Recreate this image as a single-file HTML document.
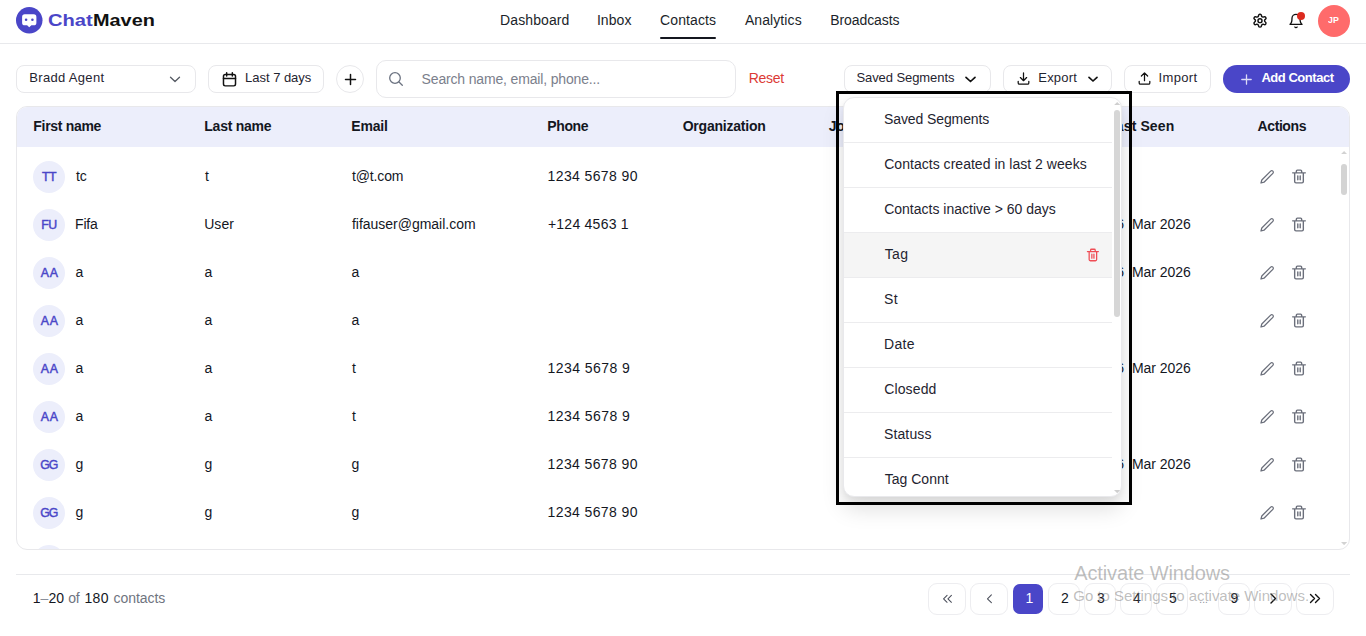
<!DOCTYPE html>
<html lang="en"><head><meta charset="utf-8"><title>ChatMaven - Contacts</title>
<style>
html,body{margin:0;padding:0;background:#fff}
body{width:1366px;height:636px;position:relative;overflow:hidden;font-family:'Liberation Sans',sans-serif}
div,svg,span{position:absolute;box-sizing:border-box}
.t{white-space:pre;line-height:normal}
</style></head><body>
<div style="left:0px;top:43px;width:1366px;height:1px;background:#e8e9ec"></div>
<svg style="left:16px;top:7px;" width="26.5" height="26.5" viewBox="0 0 26 26" fill="none"><circle cx="13" cy="13" r="13" fill="#4a46c8"/><path d="M8.6 7.2h8.8a2.6 2.6 0 0 1 2.6 2.6v5.6a2.6 2.6 0 0 1-2.6 2.6h-2.3L13 19.9 10.900 18H8.600A2.600 2.600 0 0 1 6 15.400V9.800a2.600 2.600 0 0 1 2.600-2.600z" fill="#fff"/><circle cx="9.900" cy="12.600" r="1.250" fill="#4a46c8"/><circle cx="16.100" cy="12.600" r="1.250" fill="#4a46c8"/></svg>
<div style="left:659.7px;top:36.5px;width:56px;height:2px;background:#14171f;border-radius:1px"></div>
<svg style="left:1252px;top:13.2px;" width="16" height="15.4" viewBox="0 0 24 24" preserveAspectRatio="none" fill="none"><path d="M12.22 2h-.44a2 2 0 0 0-2 2v.18a2 2 0 0 1-1 1.73l-.43.25a2 2 0 0 1-2 0l-.15-.08a2 2 0 0 0-2.73.73l-.22.38a2 2 0 0 0 .73 2.73l.15.1a2 2 0 0 1 1 1.72v.51a2 2 0 0 1-1 1.74l-.15.09a2 2 0 0 0-.73 2.73l.22.38a2 2 0 0 0 2.73.73l.15-.08a2 2 0 0 1 2 0l.43.25a2 2 0 0 1 1 1.73V20a2 2 0 0 0 2 2h.44a2 2 0 0 0 2-2v-.18a2 2 0 0 1 1-1.73l.43-.25a2 2 0 0 1 2 0l.15.08a2 2 0 0 0 2.73-.73l.22-.39a2 2 0 0 0-.73-2.73l-.15-.08a2 2 0 0 1-1-1.74v-.5a2 2 0 0 1 1-1.74l.15-.09a2 2 0 0 0 .73-2.73l-.22-.38a2 2 0 0 0-2.73-.73l-.15.08a2 2 0 0 1-2 0l-.43-.25a2 2 0 0 1-1-1.73V4a2 2 0 0 0-2-2z" stroke="#111" stroke-width="2.2" stroke-linejoin="round"/><circle cx="12" cy="12" r="3" stroke="#111" stroke-width="2.2"/></svg>
<svg style="left:1288px;top:13px;" width="16" height="16" viewBox="0 0 24 24" preserveAspectRatio="none" fill="none"><path d="M6 8a6 6 0 0 1 12 0c0 7 3 9 3 9H3s3-2 3-9" stroke="#111" stroke-width="2" stroke-linecap="round" stroke-linejoin="round"/><path d="M10.3 21a1.94 1.94 0 0 0 3.4 0" stroke="#111" stroke-width="2" stroke-linecap="round"/></svg>
<div style="left:1297px;top:12px;width:8px;height:8px;background:#dc2a1f;border-radius:50%"></div>
<div style="left:1318px;top:5px;width:32px;height:32px;background:#ff6b6b;border-radius:50%"></div>
<div style="left:16px;top:65px;width:179.5px;height:28px;border:1px solid #e8e8eb;border-radius:8px;background:#fff"></div>
<svg style="left:169px;top:74.5px;" width="12" height="9" viewBox="0 0 12 9" fill="none"><path d="M1.5 2.200L6 6.500l4.500-4.300" stroke="#555a63" stroke-width="1.300" stroke-linecap="round" stroke-linejoin="round"/></svg>
<div style="left:208px;top:65px;width:116px;height:28px;border:1px solid #e8e8eb;border-radius:8px;background:#fff"></div>
<svg style="left:220.5px;top:70.5px;" width="17" height="17" viewBox="0 0 24 24" fill="none"><rect x="3.500" y="5" width="17" height="16" rx="2.500" stroke="#111" stroke-width="2.100"/><path d="M3.500 10.500h17M8 2.500v4.500M16 2.500v4.500" stroke="#111" stroke-width="2.100" stroke-linecap="round"/></svg>
<div style="left:336px;top:65px;width:28px;height:28px;border:1px solid #e8e8eb;border-radius:50%;background:#fff"></div>
<svg style="left:343.5px;top:72.5px;" width="13" height="13" viewBox="0 0 13 13" fill="none"><path d="M6.500 1.500v10M1.500 6.500h10" stroke="#111" stroke-width="1.500" stroke-linecap="round"/></svg>
<div style="left:376px;top:60px;width:360px;height:38px;border:1px solid #e8e8eb;border-radius:10px;background:#fff"></div>
<svg style="left:388px;top:71px;" width="16" height="16" viewBox="0 0 16 16" fill="none"><circle cx="7" cy="7" r="5.300" stroke="#6b7280" stroke-width="1.300"/><path d="M11 11l3.300 3.300" stroke="#6b7280" stroke-width="1.300" stroke-linecap="round"/></svg>
<div style="left:843.5px;top:65px;width:147.5px;height:28px;border:1px solid #e8e8eb;border-radius:8px;background:#fff"></div>
<svg style="left:963.5px;top:74.5px;" width="13" height="9" viewBox="0 0 13 9" fill="none"><path d="M2 2.300l4.500 4.200L11 2.300" stroke="#111" stroke-width="1.700" stroke-linecap="round" stroke-linejoin="round"/></svg>
<div style="left:1003px;top:65px;width:108.5px;height:28px;border:1px solid #e8e8eb;border-radius:8px;background:#fff"></div>
<svg style="left:1015.5px;top:71px;" width="15" height="15" viewBox="0 0 24 24" fill="none"><path d="M12 3v12M7 10.500l5 5 5-5M3.500 16.500v2.500a2 2 0 0 0 2 2h13a2 2 0 0 0 2-2v-2.500" stroke="#111" stroke-width="2" stroke-linecap="round" stroke-linejoin="round"/></svg>
<svg style="left:1086.5px;top:74.5px;" width="12" height="9" viewBox="0 0 12 9" fill="none"><path d="M2 2.300l4 3.700 4-3.700" stroke="#111" stroke-width="1.700" stroke-linecap="round" stroke-linejoin="round"/></svg>
<div style="left:1124px;top:65px;width:86.5px;height:28px;border:1px solid #e8e8eb;border-radius:8px;background:#fff"></div>
<svg style="left:1136.5px;top:71px;" width="15" height="15" viewBox="0 0 24 24" fill="none"><path d="M12 15.500V3.500M7 8l5-5 5 5M3.500 16.500v2.500a2 2 0 0 0 2 2h13a2 2 0 0 0 2-2v-2.500" stroke="#111" stroke-width="2" stroke-linecap="round" stroke-linejoin="round"/></svg>
<div style="left:1223px;top:65px;width:127px;height:28px;background:#4a46c8;border-radius:14px"></div>
<svg style="left:1240.5px;top:73.5px;" width="11" height="11" viewBox="0 0 11 11" fill="none"><path d="M5.500 0.800v9.400M0.800 5.500h9.400" stroke="#dcdbf6" stroke-width="1.300" stroke-linecap="round"/></svg>
<div style="left:16px;top:106px;width:1334px;height:444px;border:1px solid #e8e8eb;border-radius:11px;background:#fff;overflow:hidden"><div style="left:0px;top:0px;width:1334px;height:40px;background:#eceefb"></div><div style="left:15.700000000000003px;top:54px;width:32px;height:32px;background:#eceefb;border-radius:50%"></div><svg style="left:1242px;top:62px;" width="16" height="16" viewBox="0 0 24 24" fill="none"><path d="M17.500 3.200a2.300 2.300 0 0 1 3.300 3.300L7.500 19.800 3 21l1.200-4.500z" stroke="#6b6f7b" stroke-width="1.900" stroke-linejoin="round"/></svg><svg style="left:1274px;top:61px;" width="16" height="17" viewBox="0 0 24 25" fill="none"><path d="M2.500 7h19M8 7V4.500a1.500 1.500 0 0 1 1.500-1.500h5a1.500 1.500 0 0 1 1.500 1.500V7M5.500 7v13a2 2 0 0 0 2 2h9a2 2 0 0 0 2-2V7M10.200 11.500v6M13.800 11.500v6" stroke="#6b6f7b" stroke-width="2.100" stroke-linecap="round" stroke-linejoin="round"/></svg><div style="left:15.700000000000003px;top:102px;width:32px;height:32px;background:#eceefb;border-radius:50%"></div><svg style="left:1242px;top:110px;" width="16" height="16" viewBox="0 0 24 24" fill="none"><path d="M17.500 3.200a2.300 2.300 0 0 1 3.300 3.300L7.500 19.800 3 21l1.200-4.500z" stroke="#6b6f7b" stroke-width="1.900" stroke-linejoin="round"/></svg><svg style="left:1274px;top:109px;" width="16" height="17" viewBox="0 0 24 25" fill="none"><path d="M2.500 7h19M8 7V4.500a1.500 1.500 0 0 1 1.500-1.500h5a1.500 1.500 0 0 1 1.500 1.500V7M5.500 7v13a2 2 0 0 0 2 2h9a2 2 0 0 0 2-2V7M10.200 11.500v6M13.800 11.500v6" stroke="#6b6f7b" stroke-width="2.100" stroke-linecap="round" stroke-linejoin="round"/></svg><div style="left:15.700000000000003px;top:150px;width:32px;height:32px;background:#eceefb;border-radius:50%"></div><svg style="left:1242px;top:158px;" width="16" height="16" viewBox="0 0 24 24" fill="none"><path d="M17.500 3.200a2.300 2.300 0 0 1 3.300 3.300L7.500 19.800 3 21l1.200-4.500z" stroke="#6b6f7b" stroke-width="1.900" stroke-linejoin="round"/></svg><svg style="left:1274px;top:157px;" width="16" height="17" viewBox="0 0 24 25" fill="none"><path d="M2.500 7h19M8 7V4.500a1.500 1.500 0 0 1 1.500-1.500h5a1.500 1.500 0 0 1 1.500 1.500V7M5.500 7v13a2 2 0 0 0 2 2h9a2 2 0 0 0 2-2V7M10.200 11.500v6M13.800 11.500v6" stroke="#6b6f7b" stroke-width="2.100" stroke-linecap="round" stroke-linejoin="round"/></svg><div style="left:15.700000000000003px;top:198px;width:32px;height:32px;background:#eceefb;border-radius:50%"></div><svg style="left:1242px;top:206px;" width="16" height="16" viewBox="0 0 24 24" fill="none"><path d="M17.500 3.200a2.300 2.300 0 0 1 3.300 3.300L7.500 19.800 3 21l1.200-4.500z" stroke="#6b6f7b" stroke-width="1.900" stroke-linejoin="round"/></svg><svg style="left:1274px;top:205px;" width="16" height="17" viewBox="0 0 24 25" fill="none"><path d="M2.500 7h19M8 7V4.500a1.500 1.500 0 0 1 1.500-1.500h5a1.500 1.500 0 0 1 1.500 1.500V7M5.500 7v13a2 2 0 0 0 2 2h9a2 2 0 0 0 2-2V7M10.200 11.500v6M13.800 11.500v6" stroke="#6b6f7b" stroke-width="2.100" stroke-linecap="round" stroke-linejoin="round"/></svg><div style="left:15.700000000000003px;top:246px;width:32px;height:32px;background:#eceefb;border-radius:50%"></div><svg style="left:1242px;top:254px;" width="16" height="16" viewBox="0 0 24 24" fill="none"><path d="M17.500 3.200a2.300 2.300 0 0 1 3.300 3.300L7.500 19.800 3 21l1.200-4.500z" stroke="#6b6f7b" stroke-width="1.900" stroke-linejoin="round"/></svg><svg style="left:1274px;top:253px;" width="16" height="17" viewBox="0 0 24 25" fill="none"><path d="M2.500 7h19M8 7V4.500a1.500 1.500 0 0 1 1.500-1.500h5a1.500 1.500 0 0 1 1.500 1.500V7M5.500 7v13a2 2 0 0 0 2 2h9a2 2 0 0 0 2-2V7M10.200 11.500v6M13.800 11.500v6" stroke="#6b6f7b" stroke-width="2.100" stroke-linecap="round" stroke-linejoin="round"/></svg><div style="left:15.700000000000003px;top:294px;width:32px;height:32px;background:#eceefb;border-radius:50%"></div><svg style="left:1242px;top:302px;" width="16" height="16" viewBox="0 0 24 24" fill="none"><path d="M17.500 3.200a2.300 2.300 0 0 1 3.300 3.300L7.500 19.800 3 21l1.200-4.500z" stroke="#6b6f7b" stroke-width="1.900" stroke-linejoin="round"/></svg><svg style="left:1274px;top:301px;" width="16" height="17" viewBox="0 0 24 25" fill="none"><path d="M2.500 7h19M8 7V4.500a1.500 1.500 0 0 1 1.500-1.500h5a1.500 1.500 0 0 1 1.500 1.500V7M5.500 7v13a2 2 0 0 0 2 2h9a2 2 0 0 0 2-2V7M10.200 11.500v6M13.800 11.500v6" stroke="#6b6f7b" stroke-width="2.100" stroke-linecap="round" stroke-linejoin="round"/></svg><div style="left:15.700000000000003px;top:342px;width:32px;height:32px;background:#eceefb;border-radius:50%"></div><svg style="left:1242px;top:350px;" width="16" height="16" viewBox="0 0 24 24" fill="none"><path d="M17.500 3.200a2.300 2.300 0 0 1 3.300 3.300L7.500 19.800 3 21l1.200-4.500z" stroke="#6b6f7b" stroke-width="1.900" stroke-linejoin="round"/></svg><svg style="left:1274px;top:349px;" width="16" height="17" viewBox="0 0 24 25" fill="none"><path d="M2.500 7h19M8 7V4.500a1.500 1.500 0 0 1 1.500-1.500h5a1.500 1.500 0 0 1 1.500 1.500V7M5.500 7v13a2 2 0 0 0 2 2h9a2 2 0 0 0 2-2V7M10.200 11.500v6M13.800 11.500v6" stroke="#6b6f7b" stroke-width="2.100" stroke-linecap="round" stroke-linejoin="round"/></svg><div style="left:15.700000000000003px;top:390px;width:32px;height:32px;background:#eceefb;border-radius:50%"></div><svg style="left:1242px;top:398px;" width="16" height="16" viewBox="0 0 24 24" fill="none"><path d="M17.500 3.200a2.300 2.300 0 0 1 3.300 3.300L7.500 19.800 3 21l1.200-4.500z" stroke="#6b6f7b" stroke-width="1.900" stroke-linejoin="round"/></svg><svg style="left:1274px;top:397px;" width="16" height="17" viewBox="0 0 24 25" fill="none"><path d="M2.500 7h19M8 7V4.500a1.500 1.500 0 0 1 1.500-1.500h5a1.500 1.500 0 0 1 1.500 1.500V7M5.500 7v13a2 2 0 0 0 2 2h9a2 2 0 0 0 2-2V7M10.200 11.500v6M13.800 11.500v6" stroke="#6b6f7b" stroke-width="2.100" stroke-linecap="round" stroke-linejoin="round"/></svg><div style="left:15.700000000000003px;top:438px;width:32px;height:32px;background:#eceefb;border-radius:50%"></div><div style="left:1324px;top:56.5px;width:6px;height:31.5px;background:#d4d4d4;border-radius:3px"></div><svg style="left:1324px;top:44px;" width="6.2" height="3.2" viewBox="0 0 6 3" fill="none"><path d="M0 3L3 0l3 3z" fill="#d2d2d2"/></svg><svg style="left:1324px;top:435px;" width="6.2" height="3.2" viewBox="0 0 6 3" fill="none"><path d="M0 0L3 3l3-3z" fill="#d2d2d2"/></svg></div>
<div style="left:16px;top:574px;width:1334px;height:1px;background:#e8e9ec"></div>
<div style="left:928px;top:583px;width:38px;height:32px;border:1px solid #ededf0;border-radius:9px;background:#fff"></div>
<div style="left:970px;top:583px;width:38px;height:32px;border:1px solid #ededf0;border-radius:9px;background:#fff"></div>
<div style="left:1048px;top:583px;width:32px;height:32px;border:1px solid #ededf0;border-radius:9px;background:#fff"></div>
<div style="left:1084px;top:583px;width:32px;height:32px;border:1px solid #ededf0;border-radius:9px;background:#fff"></div>
<div style="left:1120px;top:583px;width:32px;height:32px;border:1px solid #ededf0;border-radius:9px;background:#fff"></div>
<div style="left:1156px;top:583px;width:32px;height:32px;border:1px solid #ededf0;border-radius:9px;background:#fff"></div>
<div style="left:1218px;top:583px;width:32px;height:32px;border:1px solid #ededf0;border-radius:9px;background:#fff"></div>
<div style="left:1254px;top:583px;width:38px;height:32px;border:1px solid #ededf0;border-radius:9px;background:#fff"></div>
<div style="left:1296px;top:583px;width:38px;height:32px;border:1px solid #ededf0;border-radius:9px;background:#fff"></div>
<div style="left:1013px;top:584px;width:30px;height:30px;background:#4a46c8;border-radius:7px"></div>
<svg style="left:941.5px;top:594px;" width="11" height="9.6" viewBox="0 0 12 11" fill="none"><path d="M5.500 1.500L1.500 5.500l4 4M10.500 1.500L6.500 5.500l4 4" stroke="#4a4e5a" stroke-width="1.200" stroke-linecap="round" stroke-linejoin="round"/></svg>
<svg style="left:985.5px;top:594px;" width="7.3" height="9.6" viewBox="0 0 8 11" fill="none"><path d="M6 1L1.500 5.500 6 10" stroke="#4a4e5a" stroke-width="1.200" stroke-linecap="round" stroke-linejoin="round"/></svg>
<svg style="left:1269px;top:593px;" width="8" height="11" viewBox="0 0 8 11" fill="none"><path d="M2 1l4.500 4.500L2 10" stroke="#111" stroke-width="1.400" stroke-linecap="round" stroke-linejoin="round"/></svg>
<svg style="left:1309px;top:593px;" width="12" height="11" viewBox="0 0 12 11" fill="none"><path d="M1.500 1.500l4 4-4 4M6.500 1.500l4 4-4 4" stroke="#111" stroke-width="1.400" stroke-linecap="round" stroke-linejoin="round"/></svg>
<div style="left:843px;top:97px;width:279px;height:399.5px;z-index:10;background:#fff;border:1px solid #e9e9ec;border-radius:11px;overflow:hidden;box-shadow:0 12px 22px rgba(0,0,0,0.13),0 3px 6px rgba(0,0,0,0.05)"><div style="left:0px;top:44px;width:268.3px;height:1px;background:#ececee"></div><div style="left:0px;top:89px;width:268.3px;height:1px;background:#ececee"></div><div style="left:0px;top:134px;width:268.3px;height:45px;background:#f5f5f5"></div><div style="left:0px;top:134px;width:268.3px;height:1px;background:#ececee"></div><div style="left:0px;top:179px;width:268.3px;height:1px;background:#ececee"></div><div style="left:0px;top:224px;width:268.3px;height:1px;background:#ececee"></div><div style="left:0px;top:269px;width:268.3px;height:1px;background:#ececee"></div><div style="left:0px;top:314px;width:268.3px;height:1px;background:#ececee"></div><div style="left:0px;top:359px;width:268.3px;height:1px;background:#ececee"></div><svg style="left:242.29999999999995px;top:149.3px;" width="13.8" height="16" viewBox="0 0 24 26" fill="none"><path d="M2.500 7h19M8 7V4.500a1.500 1.500 0 0 1 1.500-1.500h5a1.500 1.500 0 0 1 1.500 1.500V7M5.500 7v14a2 2 0 0 0 2 2h9a2 2 0 0 0 2-2V7M10.200 11.500v7M13.800 11.500v7" stroke="#ef4d55" stroke-width="2.200" stroke-linecap="round" stroke-linejoin="round"/></svg><div style="left:270.20000000000005px;top:12px;width:5.8px;height:206.5px;background:#d6d6d6;border-radius:3px"></div><svg style="left:270px;top:4px;" width="6.4" height="3.2" viewBox="0 0 6 3" fill="none"><path d="M0 3L3 0l3 3z" fill="#cfcfcf"/></svg><svg style="left:270px;top:391.5px;" width="6.4" height="3.2" viewBox="0 0 6 3" fill="none"><path d="M0 0L3 3l3-3z" fill="#cfcfcf"/></svg></div>
<div style="left:836px;top:91px;width:296px;height:413.5px;z-index:20;border:3px solid #000"></div>
<span class="t" style="left:47.6px;top:10px;font-size:17.4px;font-weight:700;color:#4a46c8;letter-spacing:0.00px;transform-origin:0 0;transform:scaleX(1.156);">Chat</span>
<span class="t" style="left:92.8px;top:10px;font-size:17.4px;font-weight:700;color:#111111;letter-spacing:0.00px;transform-origin:0 0;transform:scaleX(1.143);">Maven</span>
<span class="t" style="left:500.1px;top:12px;font-size:14px;font-weight:400;color:#1b1f2a;letter-spacing:0.09px;">Dashboard</span>
<span class="t" style="left:596.9px;top:12px;font-size:14px;font-weight:400;color:#1b1f2a;letter-spacing:0.07px;">Inbox</span>
<span class="t" style="left:660.1px;top:12px;font-size:14px;font-weight:400;color:#1b1f2a;letter-spacing:0.09px;">Contacts</span>
<span class="t" style="left:744.9px;top:12px;font-size:14px;font-weight:400;color:#1b1f2a;letter-spacing:0.09px;">Analytics</span>
<span class="t" style="left:830.3px;top:12px;font-size:14px;font-weight:400;color:#1b1f2a;letter-spacing:-0.10px;">Broadcasts</span>
<span class="t" style="left:1328.3px;top:14px;font-size:9.8px;font-weight:700;color:#ffffff;letter-spacing:0.00px;transform-origin:0 0;transform:scaleX(0.898);">JP</span>
<span class="t" style="left:29.3px;top:70px;font-size:13px;font-weight:400;color:#1f2430;letter-spacing:0.32px;">Bradd Agent</span>
<span class="t" style="left:245.1px;top:70px;font-size:13px;font-weight:400;color:#1f2430;letter-spacing:-0.03px;">Last 7 days</span>
<span class="t" style="left:421.6px;top:71px;font-size:14px;font-weight:400;color:#7b808c;letter-spacing:-0.16px;">Search name, email, phone...</span>
<span class="t" style="left:748.7px;top:70px;font-size:14px;font-weight:400;color:#dc3a35;letter-spacing:-0.28px;">Reset</span>
<span class="t" style="left:856.4px;top:70px;font-size:13px;font-weight:400;color:#1f2430;letter-spacing:-0.07px;">Saved Segments</span>
<span class="t" style="left:1038.3px;top:70px;font-size:13px;font-weight:400;color:#1f2430;letter-spacing:0.18px;">Export</span>
<span class="t" style="left:1158.6px;top:70px;font-size:13px;font-weight:400;color:#1f2430;letter-spacing:0.34px;">Import</span>
<span class="t" style="left:1261.4px;top:70px;font-size:13px;font-weight:700;color:#ffffff;letter-spacing:-0.46px;">Add Contact</span>
<span class="t" style="left:33.3px;top:118px;font-size:14px;font-weight:700;color:#14171f;letter-spacing:-0.30px;">First name</span>
<span class="t" style="left:204.3px;top:118px;font-size:14px;font-weight:700;color:#14171f;letter-spacing:-0.25px;">Last name</span>
<span class="t" style="left:351.3px;top:118px;font-size:14px;font-weight:700;color:#14171f;letter-spacing:-0.17px;">Email</span>
<span class="t" style="left:547.3px;top:118px;font-size:14px;font-weight:700;color:#14171f;letter-spacing:-0.38px;">Phone</span>
<span class="t" style="left:682.7px;top:118px;font-size:14px;font-weight:700;color:#14171f;letter-spacing:-0.22px;">Organization</span>
<span class="t" style="left:828.8px;top:118px;font-size:14px;font-weight:700;color:#14171f;letter-spacing:-0.43px;">Job Title</span>
<span class="t" style="left:1107.2px;top:118px;font-size:14px;font-weight:700;color:#14171f;letter-spacing:0.11px;">Last Seen</span>
<span class="t" style="left:1257.6px;top:118px;font-size:14px;font-weight:700;color:#14171f;letter-spacing:-0.42px;">Actions</span>
<span class="t" style="left:41.9px;top:170px;font-size:12.3px;font-weight:400;color:#4a46c8;letter-spacing:-0.44px;z-index:1;-webkit-text-stroke:0.45px #4a46c8">TT</span>
<span class="t" style="left:75.9px;top:168px;font-size:14px;font-weight:400;color:#14171f;letter-spacing:-0.12px;z-index:1">tc</span>
<span class="t" style="left:205.0px;top:168px;font-size:14px;font-weight:400;color:#14171f;letter-spacing:2.29px;z-index:1">t</span>
<span class="t" style="left:351.9px;top:168px;font-size:14px;font-weight:400;color:#14171f;letter-spacing:-0.12px;z-index:1">t@t.com</span>
<span class="t" style="left:547.6px;top:168px;font-size:14px;font-weight:400;color:#14171f;letter-spacing:0.38px;z-index:1">1234 5678 90</span>
<span class="t" style="left:41.2px;top:218px;font-size:12.3px;font-weight:400;color:#4a46c8;letter-spacing:-0.38px;z-index:1;-webkit-text-stroke:0.45px #4a46c8">FU</span>
<span class="t" style="left:75.0px;top:216px;font-size:14px;font-weight:400;color:#14171f;letter-spacing:-0.16px;z-index:1">Fifa</span>
<span class="t" style="left:204.2px;top:216px;font-size:14px;font-weight:400;color:#14171f;letter-spacing:0.05px;z-index:1">User</span>
<span class="t" style="left:352.0px;top:216px;font-size:14px;font-weight:400;color:#14171f;letter-spacing:-0.02px;z-index:1">fifauser@gmail.com</span>
<span class="t" style="left:547.9px;top:216px;font-size:14px;font-weight:400;color:#14171f;letter-spacing:0.25px;z-index:1">+124 4563 1</span>
<span class="t" style="left:1108.1px;top:216px;font-size:14px;font-weight:400;color:#14171f;letter-spacing:0.49px;z-index:1">16</span>
<span class="t" style="left:1131.9px;top:216px;font-size:14px;font-weight:400;color:#14171f;letter-spacing:-0.04px;z-index:1">Mar 2026</span>
<span class="t" style="left:40.7px;top:266px;font-size:12.3px;font-weight:400;color:#4a46c8;letter-spacing:0.75px;z-index:1;-webkit-text-stroke:0.45px #4a46c8">AA</span>
<span class="t" style="left:75.4px;top:264px;font-size:14px;font-weight:400;color:#14171f;letter-spacing:0.88px;z-index:1">a</span>
<span class="t" style="left:204.6px;top:264px;font-size:14px;font-weight:400;color:#14171f;letter-spacing:0.88px;z-index:1">a</span>
<span class="t" style="left:351.4px;top:264px;font-size:14px;font-weight:400;color:#14171f;letter-spacing:0.88px;z-index:1">a</span>
<span class="t" style="left:1108.1px;top:264px;font-size:14px;font-weight:400;color:#14171f;letter-spacing:0.49px;z-index:1">16</span>
<span class="t" style="left:1131.9px;top:264px;font-size:14px;font-weight:400;color:#14171f;letter-spacing:-0.04px;z-index:1">Mar 2026</span>
<span class="t" style="left:40.7px;top:314px;font-size:12.3px;font-weight:400;color:#4a46c8;letter-spacing:0.75px;z-index:1;-webkit-text-stroke:0.45px #4a46c8">AA</span>
<span class="t" style="left:75.4px;top:312px;font-size:14px;font-weight:400;color:#14171f;letter-spacing:0.88px;z-index:1">a</span>
<span class="t" style="left:204.6px;top:312px;font-size:14px;font-weight:400;color:#14171f;letter-spacing:0.88px;z-index:1">a</span>
<span class="t" style="left:351.4px;top:312px;font-size:14px;font-weight:400;color:#14171f;letter-spacing:0.88px;z-index:1">a</span>
<span class="t" style="left:40.7px;top:362px;font-size:12.3px;font-weight:400;color:#4a46c8;letter-spacing:0.75px;z-index:1;-webkit-text-stroke:0.45px #4a46c8">AA</span>
<span class="t" style="left:75.4px;top:360px;font-size:14px;font-weight:400;color:#14171f;letter-spacing:0.88px;z-index:1">a</span>
<span class="t" style="left:204.6px;top:360px;font-size:14px;font-weight:400;color:#14171f;letter-spacing:0.88px;z-index:1">a</span>
<span class="t" style="left:351.9px;top:360px;font-size:14px;font-weight:400;color:#14171f;letter-spacing:2.29px;z-index:1">t</span>
<span class="t" style="left:547.6px;top:360px;font-size:14px;font-weight:400;color:#14171f;letter-spacing:0.43px;z-index:1">1234 5678 9</span>
<span class="t" style="left:1108.1px;top:360px;font-size:14px;font-weight:400;color:#14171f;letter-spacing:0.49px;z-index:1">16</span>
<span class="t" style="left:1131.9px;top:360px;font-size:14px;font-weight:400;color:#14171f;letter-spacing:-0.04px;z-index:1">Mar 2026</span>
<span class="t" style="left:40.7px;top:410px;font-size:12.3px;font-weight:400;color:#4a46c8;letter-spacing:0.75px;z-index:1;-webkit-text-stroke:0.45px #4a46c8">AA</span>
<span class="t" style="left:75.4px;top:408px;font-size:14px;font-weight:400;color:#14171f;letter-spacing:0.88px;z-index:1">a</span>
<span class="t" style="left:204.6px;top:408px;font-size:14px;font-weight:400;color:#14171f;letter-spacing:0.88px;z-index:1">a</span>
<span class="t" style="left:351.9px;top:408px;font-size:14px;font-weight:400;color:#14171f;letter-spacing:2.29px;z-index:1">t</span>
<span class="t" style="left:547.6px;top:408px;font-size:14px;font-weight:400;color:#14171f;letter-spacing:0.43px;z-index:1">1234 5678 9</span>
<span class="t" style="left:40.3px;top:458px;font-size:12.3px;font-weight:400;color:#4a46c8;letter-spacing:-0.99px;z-index:1;-webkit-text-stroke:0.45px #4a46c8">GG</span>
<span class="t" style="left:75.4px;top:456px;font-size:14px;font-weight:400;color:#14171f;letter-spacing:1.38px;z-index:1">g</span>
<span class="t" style="left:204.6px;top:456px;font-size:14px;font-weight:400;color:#14171f;letter-spacing:1.38px;z-index:1">g</span>
<span class="t" style="left:351.4px;top:456px;font-size:14px;font-weight:400;color:#14171f;letter-spacing:1.38px;z-index:1">g</span>
<span class="t" style="left:547.6px;top:456px;font-size:14px;font-weight:400;color:#14171f;letter-spacing:0.38px;z-index:1">1234 5678 90</span>
<span class="t" style="left:1108.1px;top:456px;font-size:14px;font-weight:400;color:#14171f;letter-spacing:0.49px;z-index:1">16</span>
<span class="t" style="left:1131.9px;top:456px;font-size:14px;font-weight:400;color:#14171f;letter-spacing:-0.04px;z-index:1">Mar 2026</span>
<span class="t" style="left:40.3px;top:506px;font-size:12.3px;font-weight:400;color:#4a46c8;letter-spacing:-0.99px;z-index:1;-webkit-text-stroke:0.45px #4a46c8">GG</span>
<span class="t" style="left:75.4px;top:504px;font-size:14px;font-weight:400;color:#14171f;letter-spacing:1.38px;z-index:1">g</span>
<span class="t" style="left:204.6px;top:504px;font-size:14px;font-weight:400;color:#14171f;letter-spacing:1.38px;z-index:1">g</span>
<span class="t" style="left:351.4px;top:504px;font-size:14px;font-weight:400;color:#14171f;letter-spacing:1.38px;z-index:1">g</span>
<span class="t" style="left:547.6px;top:504px;font-size:14px;font-weight:400;color:#14171f;letter-spacing:0.38px;z-index:1">1234 5678 90</span>
<span class="t" style="left:884.0px;top:111px;font-size:14px;font-weight:400;color:#1f2430;letter-spacing:-0.10px;z-index:12">Saved Segments</span>
<span class="t" style="left:884.2px;top:156px;font-size:14px;font-weight:400;color:#1f2430;letter-spacing:0.03px;z-index:12">Contacts created in last 2 weeks</span>
<span class="t" style="left:884.2px;top:201px;font-size:14px;font-weight:400;color:#1f2430;letter-spacing:-0.00px;z-index:12">Contacts inactive &gt; 60 days</span>
<span class="t" style="left:884.7px;top:246px;font-size:14px;font-weight:400;color:#1f2430;letter-spacing:0.35px;z-index:12">Tag</span>
<span class="t" style="left:884.0px;top:291px;font-size:14px;font-weight:400;color:#1f2430;letter-spacing:0.37px;z-index:12">St</span>
<span class="t" style="left:884.0px;top:336px;font-size:14px;font-weight:400;color:#1f2430;letter-spacing:0.36px;z-index:12">Date</span>
<span class="t" style="left:884.2px;top:381px;font-size:14px;font-weight:400;color:#1f2430;letter-spacing:0.14px;z-index:12">Closedd</span>
<span class="t" style="left:884.0px;top:426px;font-size:14px;font-weight:400;color:#1f2430;letter-spacing:0.12px;z-index:12">Statuss</span>
<span class="t" style="left:884.7px;top:471px;font-size:14px;font-weight:400;color:#1f2430;letter-spacing:0.02px;z-index:12">Tag Connt</span>
<span class="t" style="left:32.8px;top:590px;font-size:14px;font-weight:400;color:#14171f;letter-spacing:0.00px;">1<i style="font-style:normal;color:#8a8f9a">–</i>20</span>
<span class="t" style="left:68.3px;top:590px;font-size:14px;font-weight:400;color:#6f7480;letter-spacing:-0.23px;">of</span>
<span class="t" style="left:84.4px;top:590px;font-size:14px;font-weight:400;color:#14171f;letter-spacing:0.43px;">180</span>
<span class="t" style="left:113.5px;top:590px;font-size:14px;font-weight:400;color:#6f7480;letter-spacing:-0.05px;">contacts</span>
<span class="t" style="left:1074.3px;top:562px;font-size:20px;font-weight:400;color:rgba(110,110,110,0.45);letter-spacing:-0.14px;z-index:30">Activate Windows</span>
<span class="t" style="left:1073.3px;top:587px;font-size:15px;font-weight:400;color:rgba(110,110,110,0.45);letter-spacing:-0.03px;z-index:30">Go to Settings to activate Windows.</span>
<span class="t" style="left:1025.4px;top:590px;font-size:14px;font-weight:400;color:#ffffff;letter-spacing:0.08px;z-index:2">1</span>
<span class="t" style="left:1061.0px;top:590px;font-size:14px;font-weight:400;color:#14171f;letter-spacing:0.88px;z-index:2">2</span>
<span class="t" style="left:1096.9px;top:590px;font-size:14px;font-weight:400;color:#14171f;letter-spacing:1.38px;z-index:2">3</span>
<span class="t" style="left:1132.9px;top:590px;font-size:14px;font-weight:400;color:#14171f;letter-spacing:1.88px;z-index:2">4</span>
<span class="t" style="left:1169.0px;top:590px;font-size:14px;font-weight:400;color:#14171f;letter-spacing:1.48px;z-index:2">5</span>
<span class="t" style="left:1230.4px;top:590px;font-size:14px;font-weight:400;color:#14171f;letter-spacing:1.08px;z-index:2">9</span>
<span class="t" style="left:1199.3px;top:594px;font-size:10px;font-weight:400;color:#8a8f9a;letter-spacing:0.12px;z-index:2">...</span>
</body></html>
